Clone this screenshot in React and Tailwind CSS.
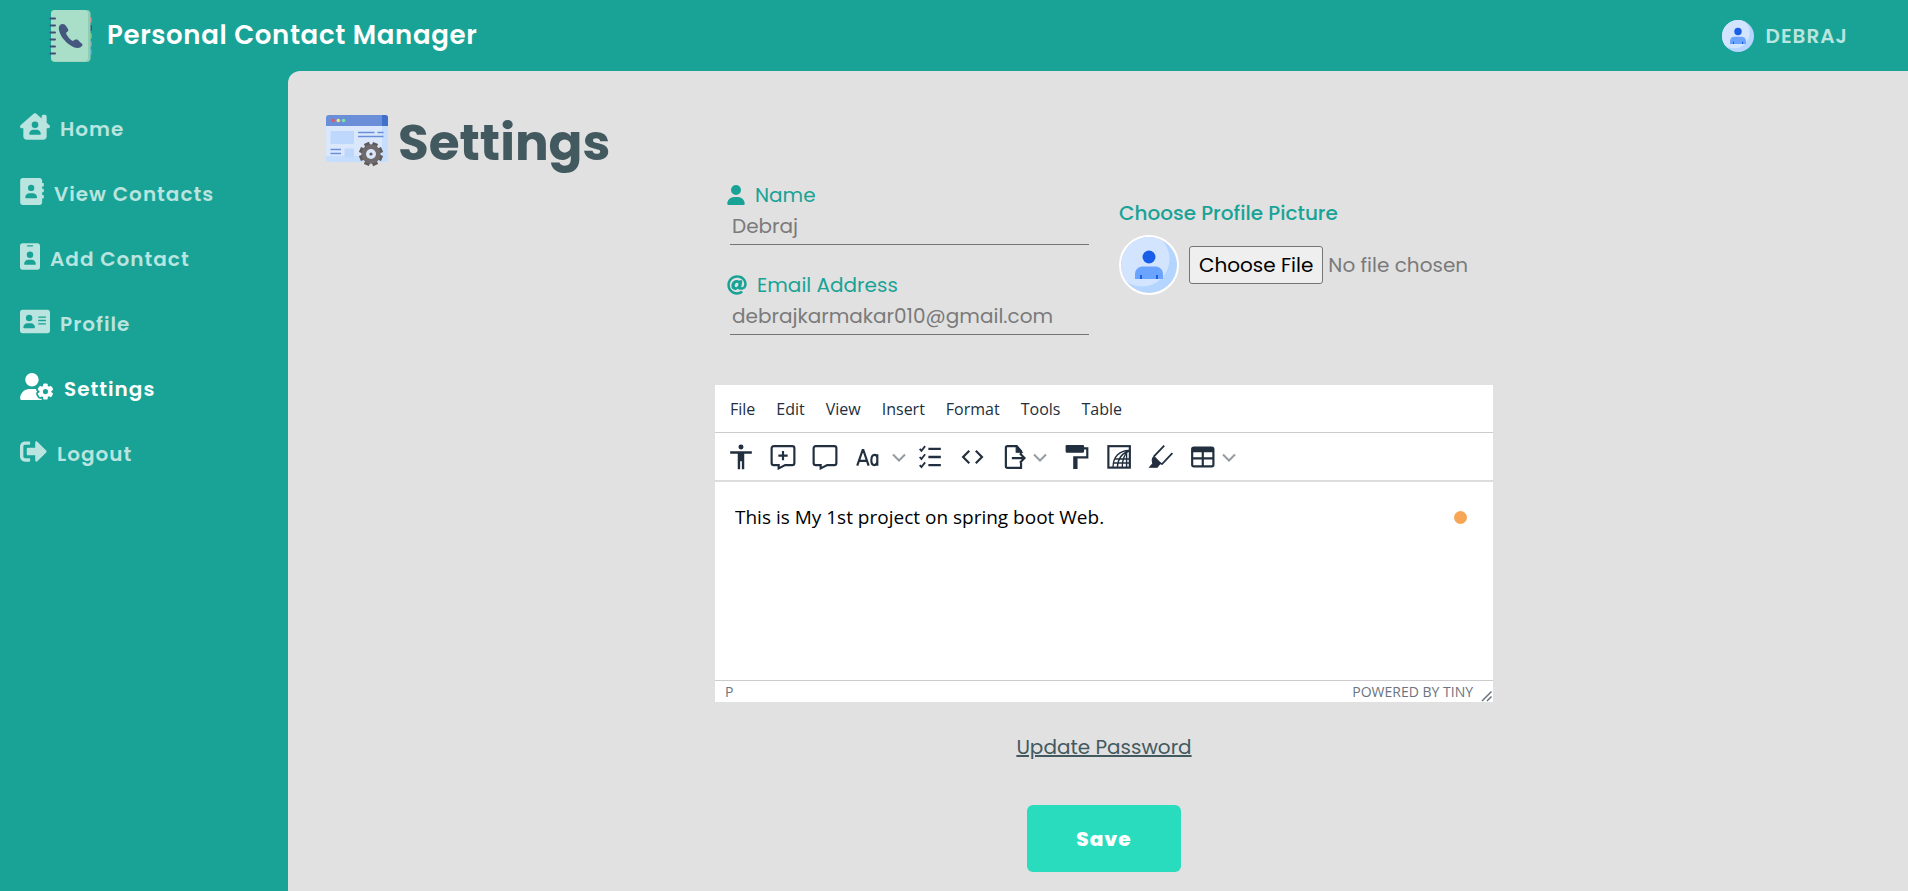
import { FaHouseChimneyUser, FaUserGear, FaUser } from "react-icons/fa6";
import { FaAt, FaSignOutAlt } from "react-icons/fa";

const AddressBook = ({ className }) => (
  <svg viewBox="0 0 448 512" fill="currentColor" className={className}>
    <path
      fillRule="evenodd"
      d="M48 0H368C394 0 416 22 416 48V96H436C442 96 448 102 448 108V148C448 154 442 160 436 160H416V204H436C442 204 448 210 448 216V256C448 262 442 268 436 268H416V320H436C442 320 448 326 448 332V376C448 382 442 388 436 388H416V464C416 490 394 512 368 512H48C22 512 0 490 0 464V48C0 22 22 0 48 0ZM208 128A60 60 0 1 0 208 248A60 60 0 1 0 208 128ZM176 288C132 288 96 322 96 366C96 376 104 384 112 384H304C312 384 320 376 320 366C320 322 284 288 240 288Z"
    />
  </svg>
);

const Badge = ({ className }) => (
  <svg viewBox="0 0 384 512" fill="currentColor" className={className}>
    <path
      fillRule="evenodd"
      d="M48 0H336C362 0 384 22 384 48V464C384 490 362 512 336 512H48C22 512 0 490 0 464V48C0 22 22 0 48 0ZM144 38A13 13 0 0 0 144 64H240A13 13 0 0 0 240 38ZM192 160A62 62 0 1 0 192 284A62 62 0 1 0 192 160ZM160 320C116 320 80 354 80 398C80 408 88 416 96 416H288C296 416 304 408 304 398C304 354 268 320 224 320Z"
    />
  </svg>
);

const Card = ({ className }) => (
  <svg viewBox="0 0 576 512" fill="currentColor" className={className}>
    <path
      fillRule="evenodd"
      d="M48 32H528C554 32 576 54 576 80V432C576 458 554 480 528 480H48C22 480 0 458 0 432V80C0 54 22 32 48 32ZM176 128A62 62 0 1 0 176 252A62 62 0 1 0 176 128ZM144 288C100 288 64 322 64 366C64 376 72 384 80 384H272C280 384 288 376 288 366C288 322 252 288 208 288ZM360 160A13 13 0 0 0 360 186H488A13 13 0 0 0 488 160ZM360 224A13 13 0 0 0 360 250H488A13 13 0 0 0 488 224ZM360 288A13 13 0 0 0 360 314H488A13 13 0 0 0 488 288Z"
    />
  </svg>
);

const Logo = ({ className }) => (
  <svg viewBox="0 0 52 52" className={className}>
    <rect x="38" y="7" width="9" height="6" rx="1.500" fill="#ef6a77" />
    <rect x="38" y="15" width="9" height="6" rx="1.500" fill="#3f5078" />
    <rect x="38" y="23" width="9" height="6" rx="1.500" fill="#6fc05e" />
    <rect x="38" y="31" width="9" height="6" rx="1.500" fill="#8b97a8" />
    <rect x="38" y="39" width="9" height="6" rx="1.500" fill="#4aa3df" />
    <rect x="6" y="0" width="39.500" height="52" rx="4" fill="#8fcdb4" />
    <rect x="6" y="0" width="37" height="51.500" rx="4" fill="#a9dfc8" />
    <path d="M5.500 8.500h4.500M5.500 15.500h4.500M5.500 22.500h4.500M5.500 29.500h4.500M5.500 36.500h4.500M5.500 43.500h4.500" stroke="#3f5078" strokeWidth="2" strokeLinecap="round" />
    <path
      d="M15 15C17 13 20 14 21 16L23 19C24 21 22 22 21 23C22 26 25 30 28 31C29 30 31 29 33 30L36 33C38 34 38 35 36 37C33 39 29 38 25 35C19 31 15 25 14 20C13.500 18 14 16 15 15Z"
      fill="#44577f"
    />
  </svg>
);

const Avatar = ({ className }) => (
  <svg viewBox="0 0 56 56" className={className}>
    <defs>
      <clipPath id="avatar-round">
        <circle cx="28" cy="28" r="28" />
      </clipPath>
    </defs>
    <g clipPath="url(#avatar-round)">
      <rect width="56" height="56" fill="#b3d5ff" />
      <circle cx="21" cy="22" r="27.500" fill="#d3e4ff" />
    </g>
    <circle cx="28" cy="20" r="6.500" fill="#195ee8" />
    <path d="M14 42V37C14 32 18 29.500 22 29.500H34C38 29.500 42 32 42 37V42Z" fill="#6ba4ff" />
    <path d="M20 38v4M36 38v4" stroke="#195ee8" strokeWidth="2" />
  </svg>
);

const SettingsPicture = ({ className }) => (
  <svg viewBox="0 0 62 52" className={className}>
    <rect x="0" y="1" width="62" height="46" rx="3" fill="#dbe8fc" />
    <path d="M56 11h6v33a3 3 0 0 1-3 3H3a3 3 0 0 1-3-3v-3h56Z" fill="#c6defd" />
    <path d="M3 0H59A3 3 0 0 1 62 3V11H0V3A3 3 0 0 1 3 0Z" fill="#6a8fd8" />
    <path d="M56 0H59A3 3 0 0 1 62 3V11H56Z" fill="#4070cb" />
    <circle cx="7" cy="5.500" r="1.800" fill="#dc5b6a" />
    <circle cx="12.300" cy="5.500" r="1.800" fill="#f9dc7c" />
    <circle cx="17.600" cy="5.500" r="1.800" fill="#7fe3a0" />
    <rect x="4.500" y="16" width="23.500" height="13" rx="1" fill="#bdd8fc" />
    <rect x="18.500" y="33.500" width="9.500" height="9" rx="1" fill="#bdd8fc" />
    <path d="M32 17.500h16.500M51.500 17.500H57.500M32 21.500H57.500M4.500 34.500H15M4.500 38.500H15" stroke="#6a8fd8" strokeWidth="1.700" />
    <g transform="translate(45 39)">
      <path d="M0 -12V12M-12 0H12M-8.500 -8.500L8.500 8.500M8.500 -8.500L-8.500 8.500" transform="rotate(22.500)" stroke="#5f5a5c" strokeWidth="5.400" />
      <circle r="7.400" fill="none" stroke="#6f6a6b" strokeWidth="4.600" />
      <circle r="5" fill="#dbe8fc" />
      <circle r="1.600" fill="#5f5a5c" />
    </g>
  </svg>
);

const Glyph = ({ children }) => (
  <svg viewBox="0 0 24 24" className="size-[26px] shrink-0" fill="none" stroke="currentColor" strokeWidth="2">
    {children}
  </svg>
);

const Chevron = () => (
  <svg viewBox="0 0 14 14" className="size-3.5 shrink-0 text-[#949ba2]" fill="none" stroke="currentColor" strokeWidth="2">
    <path d="M1 4.500L7 10.500l6-6" />
  </svg>
);

const bubble = "M3.500 2h17a2 2 0 0 1 2 2v13.500a2 2 0 0 1-2 2h-6.500L8 22.500V19.500H3.500a2 2 0 0 1-2-2V4a2 2 0 0 1 2-2Z";

const tools = [
  {
    name: "Accessibility checker",
    art: (
      <g fill="currentColor" stroke="none">
        <circle cx="12" cy="2.800" r="2.300" />
        <path d="M2 6.800H22V8.900H15V23.200H12.800V16H11.200V23.200H9V8.900H2Z" />
      </g>
    ),
  },
  { name: "Add comment", art: <path d={bubble + "M12 6.500v8.500M7.700 10.800h8.600"} /> },
  { name: "Show comments", art: <path d={bubble} /> },
  {
    name: "Change case",
    split: "gap-3",
    art: <path d="M3 20L8 5.500H8.600L13.500 20M4.700 15.500h7.300M21.500 9.500V20M21.500 12.500C21.500 10.500 20.500 10 19 10C17 10 16 12 16 15C16 18 17 19.500 18.800 19.500C20.600 19.500 21.500 18 21.500 16" />,
  },
  {
    name: "Checklist",
    art: (
      <>
        <path d="M10.500 4.500h11.500M10.500 12h11.500M10.500 19.500h11.500" strokeWidth="2.200" />
        <path d="M2.500 4.500l1.600 1.800L7.500 2M2.500 12l1.600 1.800L7.500 9.500M2.500 19.500l1.600 1.800L7.500 17" strokeWidth="1.700" />
      </>
    ),
  },
  { name: "Source code", art: <path d="M9.500 6.300L3.800 12L9.500 17.700M15.500 6.300L21.200 12L15.500 17.700" /> },
  {
    name: "Export",
    split: "gap-1.5",
    art: (
      <>
        <path d="M18.500 17V22H6a1.500 1.500 0 0 1-1.500-1.500V3.500A1.500 1.500 0 0 1 6 2H14.500L18.500 6.500V9" />
        <path d="M14 2V7.500H19.500Z" fill="currentColor" strokeWidth="1" />
        <path d="M10 13h11M17.500 8.700l4.200 4.300-4.200 4.300" />
      </>
    ),
  },
  {
    name: "Format painter",
    art: (
      <g fill="currentColor" stroke="none">
        <rect x="1.500" y="1" width="17" height="7" rx="1" />
        <path d="M18 3H22.500V13.300H12.500V23H8.500V11.300H20.500V5H18Z" />
      </g>
    ),
  },
  {
    name: "Page embed",
    art: (
      <>
        <rect x="2.200" y="2" width="19.800" height="19.800" />
        <path strokeWidth="1.300" d="M6.500 21.500C6.500 12 12 6 21.500 6M10.500 21.500C11 14 14 8.500 21.500 6.500M15 21.500C15 15 17 10 20 7M19 21.500V8M8.500 13.800H21.500M7 17.500H21.500" />
      </>
    ),
  },
  {
    name: "Permanent pen",
    art: (
      <>
        <path strokeWidth="1.700" d="M15 1.500L5.500 11.500M22.500 8.500L13 18.500L9 17" />
        <path d="M5.500 11.500L11.500 17.500L8.500 21.500H1.500L4.500 18C3.500 15.500 4 13 5.500 11.500Z" fill="currentColor" strokeWidth="1" />
      </>
    ),
  },
  {
    name: "Table options",
    split: "gap-1.5",
    art: (
      <>
        <rect x="2" y="3.200" width="19.600" height="17.400" rx="1.500" />
        <path d="M2 4.700H21.600M2 6.500H21.600M2 13.300H21.600M11.800 7V20.500" />
      </>
    ),
  },
];

const links = [
  { label: "Home", icon: <FaHouseChimneyUser className="mb-1 h-[27px] w-[30px]" /> },
  { label: "View Contacts", icon: <AddressBook className="mb-1 h-[27px] w-6" /> },
  { label: "Add Contact", icon: <Badge className="mb-1 h-[27px] w-5" /> },
  { label: "Profile", icon: <Card className="mb-1 h-[27px] w-[30px]" /> },
  { label: "Settings", icon: <FaUserGear className="mb-1 h-[27px] w-[34px]" />, active: true },
  { label: "Logout", icon: <FaSignOutAlt className="mb-1 h-[27px] w-[27px]" /> },
];

const Field = ({ id, label, type, value, icon }) => (
  <div>
    <label htmlFor={id} className="flex h-9 items-center gap-2.5 text-xl text-[#18a396]">
      {icon}
      {label}
    </label>
    <div className="pl-[3px]">
      <input
        id={id}
        type={type}
        defaultValue={value}
        className="h-8 w-full border-b border-[#757575] bg-transparent px-0.5 pb-1.5 text-xl text-[#7a7a7a] outline-none"
      />
    </div>
  </div>
);

export default function App() {
  return (
    <div className="flex min-h-screen flex-col bg-[#18a396] font-[Poppins,Inter,sans-serif]">
      <header className="flex h-[71px] items-center justify-between pr-[60px] pl-[45px]">
        <a href="#home" className="flex items-center gap-2.5 text-[26px] font-semibold tracking-wide text-white">
          <Logo className="size-[52px]" />
          Personal Contact Manager
        </a>
        <a href="#profile" className="flex items-center gap-3 text-xl font-semibold tracking-wider text-[#b9e4df]">
          <Avatar className="size-8" />
          DEBRAJ
        </a>
      </header>

      <div className="flex flex-1">
        <nav className="w-72 shrink-0 px-5 pt-[25px]">
          <ul>
            {links.map(({ label, icon, active }) => (
              <li key={label}>
                <a
                  href={"#" + label.toLowerCase().replace(" ", "-")}
                  className={
                    active
                      ? "flex h-[65px] items-center gap-2.5 text-xl font-semibold tracking-wider text-white"
                      : "flex h-[65px] items-center gap-2.5 text-xl font-semibold tracking-wider text-[#b9e4df]"
                  }
                >
                  {icon}
                  {label}
                </a>
              </li>
            ))}
          </ul>
        </nav>

        <main className="flex-1 rounded-tl-xl bg-[#e1e1e1] pt-9 pl-3">
          <h1 className="flex h-[70px] items-center gap-2.5 pl-[26px] text-[50px] font-bold text-[#435960]">
            <SettingsPicture className="mb-0.5 h-[52px] w-[62px]" />
            Settings
          </h1>

          <form className="mx-auto flex w-full max-w-[778px] flex-col items-center" onSubmit={(e) => e.preventDefault()}>
            <div className="flex w-full gap-[30px] px-3">
              <div className="flex w-[362px] flex-col gap-[22px]">
                <Field id="name" label="Name" type="text" value="Debraj" icon={<FaUser className="h-5 w-[18px]" />} />
                <Field id="email" label="Email Address" type="email" value="debrajkarmakar010@gmail.com" icon={<FaAt className="h-5 w-5" />} />
              </div>
              <div className="pt-[18px]">
                <label htmlFor="picture" className="flex h-9 items-center text-xl font-medium text-[#18a396]">
                  Choose Profile Picture
                </label>
                <div className="mt-1 flex items-center gap-2.5">
                  <Avatar className="size-[60px] rounded-full border-2 border-white" />
                  <input
                    id="picture"
                    type="file"
                    className="w-[290px] text-xl text-[#7a7a7a] file:mr-[5px] file:h-[38px] file:rounded-[3px] file:border file:border-solid file:border-[#757575] file:bg-[#efefef] file:px-[9px] file:text-black"
                  />
                </div>
              </div>
            </div>

            <section className="mt-[50px] w-full bg-white font-['Segoe_UI','Open_Sans',sans-serif] text-[#222f3e]">
              <div className="flex h-12 items-center gap-[21px] border-b border-[#cccccc] px-[15px] text-base">
                {["File", "Edit", "View", "Insert", "Format", "Tools", "Table"].map((m) => (
                  <button key={m} type="button">
                    {m}
                  </button>
                ))}
              </div>
              <div className="flex h-[49px] items-center border-b-2 border-[#dddddd] px-[5px]">
                {tools.map(({ name, art, split }) =>
                  split ? (
                    <button
                      key={name}
                      type="button"
                      aria-label={name}
                      className={split === "gap-3" ? "flex h-9 w-[63px] items-center gap-3 pl-2" : "flex h-9 w-[63px] items-center gap-1.5 pl-2"}
                    >
                      <Glyph>{art}</Glyph>
                      <Chevron />
                    </button>
                  ) : (
                    <button key={name} type="button" aria-label={name} className="flex h-9 w-[42px] items-center justify-center">
                      <Glyph>{art}</Glyph>
                    </button>
                  ),
                )}
              </div>
              <div className="flex h-[198px] items-start justify-between pt-[15px] pr-[26px] pl-5">
                <textarea
                  aria-label="About"
                  defaultValue="This is My 1st project on spring boot Web."
                  className="h-[170px] flex-1 resize-none text-[19px] leading-10 text-black outline-none"
                />
                <span className="mt-3.5 size-[13px] rounded-full bg-[#f6a654]" />
              </div>
              <div className="flex h-[22px] items-center border-t border-[#cccccc] pl-2.5 text-sm text-[#6b7480]">
                <span className="flex-1">P</span>
                <a href="#tiny">POWERED BY TINY</a>
                <svg viewBox="0 0 12 12" className="ml-2 size-3 self-end" stroke="currentColor" strokeWidth="1.500">
                  <path d="M1 11L10.500 1.500M6 11L10.500 6.500" />
                </svg>
              </div>
            </section>

            <a href="#password" className="mt-[31px] text-xl text-[#435960] underline">
              Update Password
            </a>
            <button type="submit" className="mt-11 mb-5 h-[67px] w-[154px] rounded-md bg-[#2adcbe] text-xl font-extrabold tracking-wider text-white">
              Save
            </button>
          </form>
        </main>
      </div>
    </div>
  );
}
